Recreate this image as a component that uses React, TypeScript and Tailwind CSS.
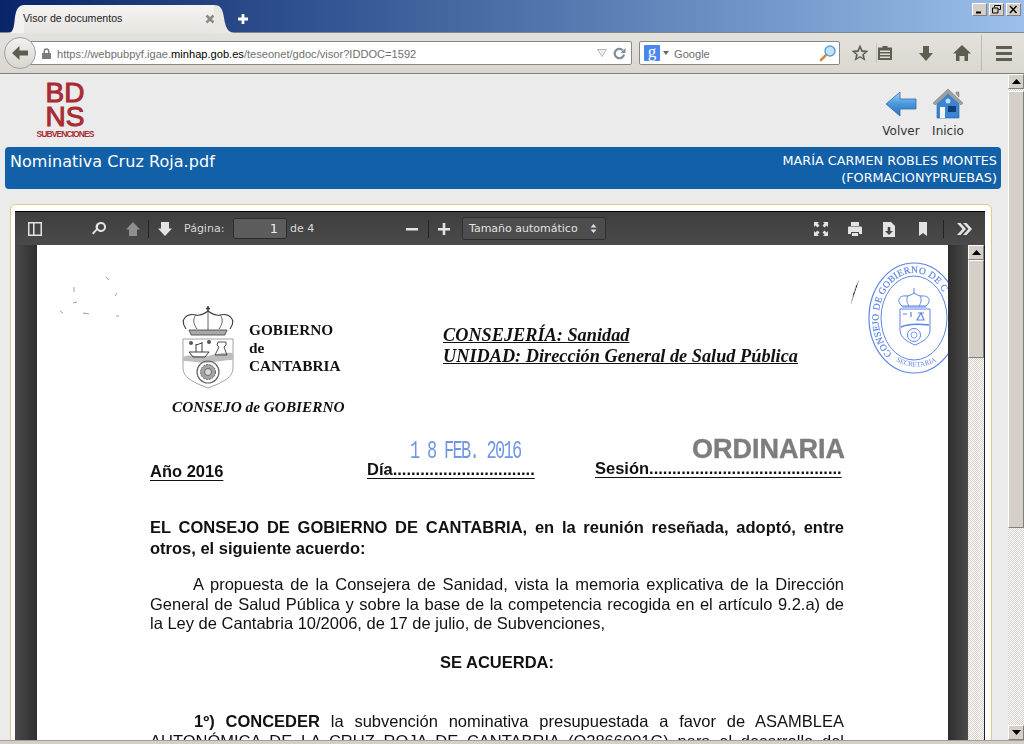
import type { ReactNode } from 'react'

const dither = "bg-[repeating-conic-gradient(#d4d0c8_0_25%,#ffffff_0_50%)] bg-[length:2px_2px]"
const raised = "border border-t-white border-l-white border-r-[#808080] border-b-[#808080] bg-[#d4d0c8]"

const WinButton = ({ children }: { children: ReactNode }) => (
  <div className={`w-[15px] h-[13px] flex items-center justify-center ${raised}`}>
    <svg width="11" height="9" viewBox="0 0 11 9" fill="none" stroke="#000">{children}</svg>
  </div>
)

const ScrollArrow = ({ up }: { up?: boolean }) => (
  <div className={`w-full h-[15px] shrink-0 flex items-center justify-center ${raised}`}>
    <svg width="9" height="5" viewBox="0 0 9 5">
      <path d={up ? "M4.5 0 9 5H0z" : "M0 0h9L4.5 5z"} fill="#000" />
    </svg>
  </div>
)

const NavIcon = ({ d, className }: { d: string; className: string }) => (
  <svg width="20" height="20" viewBox="0 0 20 20" className={className}>
    <path d={d} fill="#5f5c50" fillRule="evenodd" />
  </svg>
)

const Tool = ({ children, className = "" }: { children: ReactNode; className?: string }) => (
  <div className={`w-8 h-[34px] shrink-0 flex items-center justify-center ${className}`}>
    <svg width="20" height="20" viewBox="0 0 20 20" fill="#e4e4e4" fillRule="evenodd">{children}</svg>
  </div>
)

const Sep = ({ className = "" }: { className?: string }) => (
  <div className={`w-px h-[18px] bg-[#222] shrink-0 ${className}`} />
)

const BrowserChrome = () => (
  <>
    <div className="h-[33px] flex bg-gradient-to-r from-[#0a246a] to-[#9cc0ea] border-b border-[#83878c]">
      <div className="flex h-[28px] mt-[5px] ml-[8px]">
        <svg width="16" height="28" viewBox="0 0 16 28">
          <path d="M0 28C6 28 6 20 7 12 8 4 11 0 16 0V28z" fill="#f3f2ef" />
        </svg>
        <div className="w-[190px] bg-gradient-to-b from-[#f4f4f2] to-[#e7e5e0] flex items-center text-[10.600px] text-[#222]">
          <span className="-ml-[1px] flex-1">Visor de documentos</span>
          <svg width="10" height="10" viewBox="0 0 10 10" className="-mr-[1px]">
            <path d="M1.500 1.500 8.500 8.500M8.500 1.500 1.500 8.500" stroke="#8a8a8a" strokeWidth="2.600" />
          </svg>
        </div>
        <svg width="21" height="28" viewBox="0 0 21 28">
          <path d="M0 0C6 0 8 3 9.500 10 11 18 12 28 21 28H0z" fill="#eae8e3" />
        </svg>
      </div>
      <svg width="12" height="12" viewBox="0 0 12 12" className="ml-[2px] mt-[13px]">
        <path d="M6 1v10M1 6h10" stroke="#fff" strokeWidth="2.800" />
      </svg>
      <div className="ml-auto mt-[3px] mr-[3px] flex gap-[2px] h-[13px]">
        <WinButton><path d="M2 7.500h5" strokeWidth="2" /></WinButton>
        <WinButton><path d="M3.500 2.500V.5h6v4h-2M1.500 3h5.500v5H1.500z" /></WinButton>
        <WinButton><path d="M2 1l6.500 7M8.500 1 2 8" strokeWidth="1.400" /></WinButton>
      </div>
    </div>

    <div className="h-[41px] flex items-center border-b border-[#7d7d7d] bg-gradient-to-b from-[#e4e2dd] to-[#dad7d0] text-[11.100px]">
      <div className="relative z-10 ml-[4px] w-[32px] h-[32px] rounded-full bg-gradient-to-b from-[#f2f1ee] to-[#d9d6cf] border border-[#9aa2a8] flex items-center justify-center">
        <svg width="18" height="16" viewBox="0 0 18 16">
          <path d="M8.500 1 1 8l7.500 7V10.500H17v-5H8.500z" fill="#5f5c50" />
        </svg>
      </div>
      <div className="-ml-[6px] w-[602px] h-[24px] bg-white border border-[#888] rounded-r-[2px] flex items-center pl-[9px] pr-[4px]">
        <svg width="11" height="11" viewBox="0 0 11 11" className="ml-[1px] shrink-0">
          <path d="M2.500 5V3.300a3 3 0 0 1 6 0V5H10v6H1V5zM4 5h3V3.300a1.500 1.500 0 0 0-3 0z" fill="#7d7d7d" fillRule="evenodd" />
        </svg>
        <span className="ml-[5px] mt-[2px] text-[#6f6f6f] whitespace-nowrap">
          https://webpubpyf.igae.<span className="text-black">minhap.gob.es</span>/teseonet/gdoc/visor?IDDOC=1592
        </span>
        <svg width="10" height="8" viewBox="0 0 10 8" className="ml-auto">
          <path d="M.5.500h9L5 7.500z" fill="#eceef0" stroke="#b5b8ba" />
        </svg>
        <svg width="13" height="13" viewBox="0 0 13 13" className="ml-[6px] mr-[1px]">
          <path d="M11 7.500a4.700 4.700 0 1 1-1.300-4.300" fill="none" stroke="#7f8f95" strokeWidth="2.200" />
          <path d="M12.500 1v5h-5z" fill="#7f8f95" />
        </svg>
      </div>
      <div className="ml-[7px] w-[201px] h-[24px] bg-white border border-[#888] rounded-[2px] flex items-center pl-[4px] pr-[2px]">
        <div className="w-[16px] h-[16px] bg-[#4a86f0] rounded-[1px] flex items-center justify-center text-white text-[17px] font-['Liberation_Serif',serif] leading-none pb-[3px]">g</div>
        <svg width="6" height="4" viewBox="0 0 6 4" className="ml-[3px]"><path d="M0 0h6L3 4z" fill="#666" /></svg>
        <span className="ml-[5px] mt-[2px] text-[#6d6d6d]">Google</span>
        <svg width="18" height="18" viewBox="0 0 18 18" className="ml-auto">
          <path d="M2 16l5-5" stroke="#d98a3a" strokeWidth="2.600" strokeLinecap="round" />
          <circle cx="11" cy="7" r="5" fill="#bfe3fb" stroke="#5c9fd6" strokeWidth="1.400" />
        </svg>
      </div>
      <NavIcon className="ml-[10px]" d="M10 1.500l2.500 5.700 6 .6-4.500 4 1.300 6L10 14.600l-5.300 3.200 1.300-6-4.500-4 6-.6zM10 5.500 8.600 8.900l-3.500.3 2.700 2.300-.8 3.500 3-1.900 3 1.900-.8-3.500 2.700-2.300-3.500-.3z" />
      <div className="w-px h-[20px] bg-[#c8c5bc] ml-[6px]" />
      <NavIcon className="-ml-[2px]" d="M7.500 3h5v1.500H17V17H3V4.500h4.500zM5 7.500V9h10V7.500zM5 10.500V12h10v-1.500zM5 13.500V15h10v-1.500z" />
      <NavIcon className="ml-[21px]" d="M7 3h6v7h4l-7 8-7-8h4z" />
      <NavIcon className="ml-[16px]" d="M10 2 19 10.500h-3V18h-3.500v-5h-5v5H4v-7.500H1z" />
      <div className="w-px h-[36px] bg-[#bdbab1] ml-[9px]" />
      <div className="ml-[14px] flex flex-col gap-[3px]">
        <div className="w-[16px] h-[3px] bg-[#5f5c50]" />
        <div className="w-[16px] h-[3px] bg-[#5f5c50]" />
        <div className="w-[16px] h-[3px] bg-[#5f5c50]" />
      </div>
    </div>
  </>
)

const ViewerToolbar = () => (
  <div className="h-[34px] shrink-0 flex items-center bg-gradient-to-b from-[#3f3f3f] to-[#4a4a4a] border-t border-black text-[11px] text-[#d9d9d9] shadow-[0_1px_0_#9a9a9a] whitespace-nowrap">
    <Tool className="ml-1">
      <path d="M3 3h14v14H3zM4.500 4.500v11H8v-11zM9.500 4.500v11h6v-11z" />
    </Tool>
    <Tool className="ml-8">
      <path d="M12 3a5 5 0 1 1-3.800 8.200L4.500 15.500 3 14l4-4A5 5 0 0 1 12 3zm0 2a3 3 0 1 0 0 6 3 3 0 0 0 0-6z" />
    </Tool>
    <Tool className="ml-[2px]">
      <path d="M10 3 17 10.500H14V17H6V10.500H3z" fill="#8f8f8f" />
    </Tool>
    <Sep className="-ml-px" />
    <Tool>
      <path d="M6 3h8v6.500h3L10 17 3 9.500H6z" />
    </Tool>
    <span className="ml-[3px] w-[39px] pt-[1px]">Página:</span>
    <div className="ml-[10px] w-[54px] h-[21px] bg-[#5c5c5c] border border-[#2b2b2b] rounded-[2px] text-right pr-[8px] text-[13px] leading-[19px] text-[#eee]">1</div>
    <span className="ml-[3px] w-[25px] pt-[1px]">de 4</span>

    <Tool className="ml-[81px]"><path d="M4 9h12v2.500H4z" /></Tool>
    <Sep />
    <Tool className="-ml-px"><path d="M4 9h4.700V4h2.600v5H16v2.500h-4.700V16H8.700v-4.500H4z" /></Tool>
    <div className="ml-[2px] w-[144px] h-[23px] bg-[#4d4d4d] border border-[#2f2f2f] rounded-[2px] flex items-center pl-[6px] text-[#e3e3e3]">
      <span className="flex-1 pt-[1px]">Tamaño automático</span>
      <svg width="7" height="11" viewBox="0 0 7 11" className="mr-[8px]">
        <path d="M3.500 1 6.500 4.500H.5zM3.500 10 .5 6.500h6z" fill="#ddd" />
      </svg>
    </div>

    <Tool className="ml-[199px]">
      <path d="M3 3h5L6.500 4.500 8.500 6.500 6.500 8.500 4.500 6.500 3 8zM17 3v5l-1.500-1.500-2 2-2-2 2-2L12 3zM3 17v-5l1.500 1.500 2-2 2 2-2 2L8 17zM17 17h-5l1.500-1.500-2-2 2-2 2 2L17 12z" />
    </Tool>
    <Tool className="ml-[2px]">
      <path d="M6 3h8v4H6zM3 8.500Q3 7.500 4 7.500h12q1 0 1 1V15h-3v-2H6v2H3zM7 14h6v3H7z" />
    </Tool>
    <Tool className="ml-[2px]">
      <path d="M4 3h8l4 4v11H4zM8.700 8v4H6l4 4 4-4h-2.700V8z" />
    </Tool>
    <Tool className="ml-[2px]">
      <path d="M6 3h8v14l-4-3-4 3z" />
    </Tool>
    <Sep className="ml-[4px]" />
    <Tool className="ml-[4px]">
      <path d="M3 4h3.500L12 10l-5.500 6H3l5.500-6zM9 4h3.500L18 10l-5.500 6H9l5.500-6z" />
    </Tool>
  </div>
)

const CoatOfArms = () => (
  <svg width="52" height="83" viewBox="0 0 52 83" fill="none" stroke="#3c3c3c" strokeWidth="0.800" className="shrink-0">
    <path d="M26 0v6M24 2.500h4" strokeWidth="1.500" />
    <path d="M4 23C-3 13 5 7 14 9c4 1 8-1 12-4 4 3 8 5 12 4 9-2 17 4 10 14" strokeWidth="1.100" />
    <path d="M14 9c-4 4-2 10 1 14M26 5v19M38 9c4 4 2 10-1 14" />
    <path d="M7 24h38l-2 5H9z" fill="#a8a8a8" />
    <path d="M1 33h50v29c0 11-15 16-25 20C16 78 1 73 1 62z" stroke="#8a8a8a" />
    <path d="M1 51c10-4 17 1 25-1 8-2 16-4 25-3v7c-9 0-17 2-25 3-9 0-17-2-25-2z" fill="#bdbdbd" stroke="none" />
    <path d="M7 46h20l-4 5H11zM14 46V38M20 46V36M14 39l6-2" strokeWidth="1" />
    <path d="M36 36h8v3l-2 2 3 8H33l4-8-2-2z" strokeWidth="0.900" />
    <circle cx="9" cy="37" r="2" fill="#555" stroke="none" />
    <circle cx="27" cy="36" r="2" fill="#555" stroke="none" />
    <circle cx="26" cy="66" r="11" stroke="#666" strokeWidth="1.200" />
    <circle cx="26" cy="66" r="7.500" fill="#a4a4a4" stroke="#444" strokeDasharray="2 1" />
    <circle cx="26" cy="66" r="3.500" fill="#d8d8d8" stroke="#555" />
  </svg>
)

const Seal = () => (
  <svg width="92" height="112" viewBox="0 0 92 112" fill="none" stroke="#5d85e6" className="absolute left-[831px] top-[17px] shrink-0">
    <defs>
      <path id="sealTop" d="M24 92A35.500 45.500 0 1 1 80 43" />
      <path id="sealBottom" d="M28 99Q50 112 76 95" />
    </defs>
    <ellipse cx="46" cy="56" rx="45" ry="55" strokeWidth="1.200" />
    <ellipse cx="46" cy="56" rx="33" ry="42" strokeWidth="1" />
    <text fontFamily="'Liberation Serif', serif" fontSize="9.500" fill="#5d85e6" stroke="#5d85e6" strokeWidth="0.200" letterSpacing="0.300">
      <textPath href="#sealTop">CONSEJO DE GOBIERNO DE C</textPath>
    </text>
    <text fontFamily="'Liberation Serif', serif" fontSize="7" fill="#5d85e6" stroke="none">
      <textPath href="#sealBottom">SECRETARIA</textPath>
    </text>
    <path d="M34 44c-6-5-3-11 4-10 3 0 5-1 8-3 3 2 5 3 8 3 7-1 10 5 4 10zM46 26v5M34 45h24M40 34c-2 3-1 7 1 10M52 34c2 3 1 7-1 10" strokeWidth="1" />
    <path d="M32 47h30v21c0 8-8 12-15 15-7-3-15-7-15-15z" strokeWidth="1" />
    <path d="M33 65c8-4 20-3 28-2" strokeWidth="1.500" />
    <path d="M35 52h4M43 50v5M50 51h6M53 51l3 7h-7z" strokeWidth="1.200" />
    <circle cx="46" cy="73" r="6.500" strokeWidth="1" />
    <circle cx="46" cy="73" r="3" strokeWidth="0.800" />
  </svg>
)

const line = "block [text-align-last:justify]"

const PdfPage = () => (
  <div className="relative w-[911px] shrink-0 h-full overflow-hidden bg-white pl-[113px] pr-[104px] pt-[61px] font-['Liberation_Sans',sans-serif] text-[16.500px] text-[#111] blur-[0.3px]">
    <svg width="64" height="60" viewBox="0 0 64 60" stroke="#888" strokeWidth="0.800" className="absolute left-[22px] top-[28px]">
      <path d="M47 4l3 3M15 14v5M58 20l-2 3M14 30l4-1M1 38l3 2M24 40l6 1M57 43h3" />
    </svg>
    <svg width="10" height="30" viewBox="0 0 10 30" stroke="#c3d0ef" className="absolute left-[813px] top-[33px]">
      <path d="M9 2C5 9 3 16 1 26" strokeDasharray="6 2" />
    </svg>
    <Seal />

    <div className="flex font-['Liberation_Serif',serif] font-bold">
      <div className="w-[293px] shrink-0">
        <div className="flex pl-[32px]">
          <CoatOfArms />
          <div className="ml-[15px] mt-[15px] text-[15.300px] leading-[18px]">
            <div>GOBIERNO</div>
            <div>de</div>
            <div>CANTABRIA</div>
          </div>
        </div>
        <div className="mt-[8px] ml-[22px] italic text-[15.300px] leading-[20px] whitespace-nowrap">CONSEJO de GOBIERNO</div>
      </div>
      <div className="mt-[19px] italic text-[18.300px] leading-[21px] underline whitespace-nowrap">
        <div>CONSEJERÍA: Sanidad</div>
        <div>UNIDAD: Dirección General de Salud Pública</div>
      </div>
    </div>

    <div className="relative mt-[44px] flex h-[20px] font-bold leading-[20px] whitespace-nowrap underline underline-offset-3">
      <span className="w-[217px] shrink-0">Año 2016</span>
      <span className="w-[228px] shrink-0 -mt-[2px]">Día...............................</span>
      <span className="-mt-[3px]">Sesión..........................................</span>
      <span className="absolute left-[260px] -top-[19px] font-['Liberation_Mono',monospace] font-normal no-underline text-[#6f97e6] text-[17px] scale-y-[1.500] tracking-[-1.700px]">1 8 FEB. 2016</span>
      <span className="absolute left-[542px] -top-[22px] text-[27px] no-underline text-[#7d7d7d] [-webkit-text-stroke:0.4px_#7d7d7d]">ORDINARIA</span>
    </div>

    <div className="mt-[36px] font-bold leading-[21px]">
      <span className={line}>EL CONSEJO DE GOBIERNO DE CANTABRIA, en la reunión reseñada, adoptó, entre</span>
      <span className="block">otros, el siguiente acuerdo:</span>
    </div>

    <div className="mt-[16px] leading-[19.500px]">
      <span className={`${line} pl-[43px]`}>A propuesta de la  Consejera de Sanidad, vista la memoria explicativa de la Dirección</span>
      <span className={line}>General de Salud Pública y sobre la base de la competencia recogida en el artículo 9.2.a) de</span>
      <span className="block">la Ley de Cantabria 10/2006, de 17 de julio, de Subvenciones,</span>
    </div>

    <div className="mt-[18px] text-center font-bold leading-[20px]">SE ACUERDA:</div>

    <div className="mt-[39px] leading-[20px]">
      <span className={`${line} pl-[44px]`}><b>1º) CONCEDER</b> la subvención nominativa presupuestada a favor de ASAMBLEA</span>
      <span className={line}>AUTONÓMICA DE LA CRUZ ROJA DE CANTABRIA (Q2866001G) para el desarrollo del</span>
    </div>
  </div>
)

const App = () => {
  return (
    <div className="w-[1024px] h-[744px] overflow-hidden flex flex-col bg-[#ebebeb] font-['Liberation_Sans',sans-serif]">
      <BrowserChrome />

      <div className="h-[666px] flex">
        <div className="w-[1008px] shrink-0 overflow-hidden font-['DejaVu_Sans',sans-serif]">
          <div className="h-[73px] flex">
            <div className="ml-[36px] mt-[7px] w-[58px] text-[#a92b31] font-['Liberation_Sans',sans-serif] font-bold text-center">
              <div className="text-[28px] leading-[24px] font-normal [-webkit-text-stroke:1px_#a92b31]">BD</div>
              <div className="text-[28px] leading-[24px] font-normal [-webkit-text-stroke:1px_#a92b31]">NS</div>
              <div className="text-[8.500px] leading-[9px] mt-[1px] tracking-[-0.900px] whitespace-nowrap">SUBVENCIONES</div>
            </div>
            <div className="ml-auto mr-[44px] mt-[14px] flex gap-[13px] text-[12px] text-[#333] leading-[14px]">
              <div className="flex flex-col items-center w-[37px]">
                <svg width="32" height="32" viewBox="0 0 32 32" className="shrink-0">
                  <defs>
                    <linearGradient id="arrowFill" x1="0" y1="0" x2="0" y2="1">
                      <stop offset="0" stopColor="#a9d2f3" />
                      <stop offset="0.500" stopColor="#4a97dc" />
                      <stop offset="1" stopColor="#2a72bd" />
                    </linearGradient>
                  </defs>
                  <path d="M15 4 1 16l14 12V21h16V11H15z" fill="url(#arrowFill)" stroke="#2c6cad" strokeWidth="0.800" />
                </svg>
                <span className="mt-[4px] ml-[1px]">Volver</span>
              </div>
              <div className="flex flex-col items-center w-[32px]">
                <svg width="32" height="32" viewBox="0 0 32 32" className="shrink-0">
                  <path d="M16 1 31 15l-2 2L16 5 3 17l-2-2zM24 4h3v5l-3-3z" fill="#9a9fa3" stroke="#777" strokeWidth="0.500" />
                  <path d="M16 6 27 16v14H5V16z" fill="#3b84cf" stroke="#1f5f9f" strokeWidth="0.600" />
                  <circle cx="16" cy="13" r="2.500" fill="#bcdcf5" />
                  <path d="M8 19h5v11H8z" fill="#f4f4f4" />
                  <path d="M16 18h8v6h-8z" fill="#123f73" />
                </svg>
                <span className="mt-[4px]">Inicio</span>
              </div>
            </div>
          </div>

          <div className="ml-[5px] w-[996px] h-[42px] bg-[#1160a8] rounded-[4px] flex justify-between pt-[3px] pl-[5px] pr-[4px] text-white">
            <span className="mt-[1px] text-[16px] leading-[22px] tracking-[0.050px]">Nominativa Cruz Roja.pdf</span>
            <span className="mt-[2px] text-[12.800px] leading-[17px] text-right">MARÍA CARMEN ROBLES MONTES<br />(FORMACIONYPRUEBAS)</span>
          </div>

          <div className="mt-[15px] ml-[10px] w-[982px] h-[540px] bg-white border border-[#e0c98e] rounded-[6px] pl-[4px] pt-[6px]">
            <div className="w-[970px] h-[529px] flex flex-col">
              <ViewerToolbar />
              <div className="flex-1 min-h-0 flex bg-[#404040]">
                <div className="w-[22px] shrink-0 bg-gradient-to-r from-[#4a4a4a] to-[#2f2f2f]" />
                <PdfPage />
                <div className="w-[20px] shrink-0 bg-gradient-to-r from-[#2e2e2e] to-[#4b4b4b]" />
                <div className={`w-[17px] shrink-0 flex flex-col border-r border-[#222] ${dither}`}>
                  <ScrollArrow up />
                  <div className={`h-[98px] shrink-0 ${raised}`} />
                </div>
              </div>
            </div>
          </div>
        </div>

        <div className={`w-[16px] shrink-0 flex flex-col ${dither}`}>
          <ScrollArrow up />
          <div className={`h-[437px] mt-[2px] shrink-0 ${raised}`} />
          <div className="flex-1" />
          <ScrollArrow />
        </div>
      </div>

      <div className="h-[4px] bg-[#d4d0c8] border-t border-[#a0a0a0]" />
    </div>
  )
}

export default App
